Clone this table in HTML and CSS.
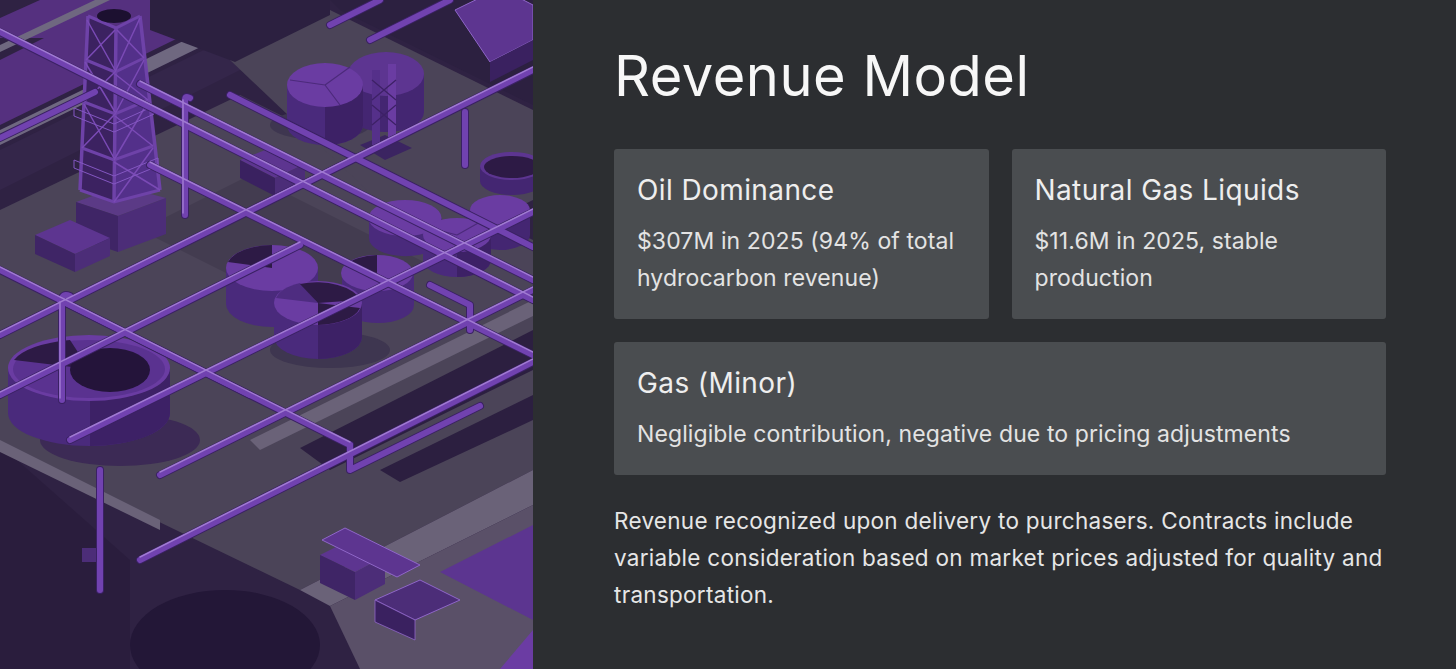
FILE: index.html
```html
<!DOCTYPE html>
<html lang="en">
<head>
<meta charset="utf-8">
<title>Revenue Model</title>
<link rel="stylesheet" href="styles.css">
</head>
<body>
<main class="slide">
  <div class="art">
    <svg class="plant" viewBox="0 0 533 669" width="533" height="669" preserveAspectRatio="none" aria-hidden="true">
      <rect width="533" height="669" fill="#2f2243"/>
      <!-- ground planes -->
      <polygon points="0,18 40,0 150,0 150,12 95,38 0,38" fill="#55307f"/>
      <polygon points="0,45 95,0 110,0 0,52" fill="#6f6880"/>
      <polygon points="0,60 120,0 215,0 215,20 0,125" fill="#55307f"/>
      <polygon points="0,130 210,28 225,35 0,145" fill="#6f6880"/>
      <polygon points="0,150 220,42 260,60 60,160 0,190" fill="#34264a"/>
      <polygon points="0,210 240,95 533,240 533,470 300,590 0,445" fill="#4b4458"/>
      <polygon points="230,60 330,10 533,110 533,200 430,250" fill="#4b4458"/>
      <polygon points="150,0 330,0 330,15 235,62 150,30" fill="#2c2040"/>
      <polygon points="330,0 533,0 533,105 340,10" fill="#2c2040"/>
      <polygon points="140,230 250,175 430,265 320,320" fill="#433c50"/>
      <polygon points="0,445 0,669 130,669 130,560" fill="#2a1d3d"/>
      <polygon points="533,470 300,590 330,606 533,505" fill="#6a6278"/>
      <polygon points="533,300 250,440 260,450 533,316" fill="#6a6278"/>
      <polygon points="533,330 300,448 330,470 533,370" fill="#2c1f40"/>
      <polygon points="533,395 380,470 400,482 533,420" fill="#2c1f40"/>
      <polygon points="533,505 330,606 360,669 533,669" fill="#5a5068"/>
      <polygon points="533,525 440,572 533,620" fill="#5c3590"/>
      <polygon points="533,630 500,669 533,669" fill="#6b3ca3"/>
      <ellipse cx="225" cy="645" rx="95" ry="55" fill="#231737"/>
      <polygon points="0,440 100,490 160,520 160,530 0,452" fill="#6a6278"/>
      <!-- shadows -->
      <ellipse cx="120" cy="440" rx="80" ry="26" fill="#3c2a55"/>
      <ellipse cx="330" cy="350" rx="60" ry="18" fill="#3e3650"/>
      <ellipse cx="320" cy="125" rx="50" ry="15" fill="#3e3650"/>
      <!-- tanks top right -->
      <g>
        <path d="M348,74 v38 a38,20 0 0 0 76,0 v-38 z" fill="#442672"/>
        <ellipse cx="386" cy="74" rx="38" ry="22" fill="#5d3591"/>
        <path d="M287,85 v40 a38,20 0 0 0 76,0 v-40 z" fill="#4a2a7c"/>
        <path d="M325,105 v40 a38,20 0 0 0 38,-20 v-40 z" fill="#3d2166"/>
        <ellipse cx="325" cy="85" rx="38" ry="22" fill="#6a3ca2"/>
        <path d="M325,85 L290,80 M325,85 L350,67 M325,85 L340,105" stroke="#4c2a7b" stroke-width="1.2"/>
      </g>
      <!-- small tower right -->
      <g>
        <polygon points="360,145 385,135 412,148 385,160" fill="#3b2461"/>
        <rect x="372" y="70" width="8" height="75" fill="#55308a"/>
        <rect x="388" y="64" width="8" height="78" fill="#6a3ca2"/>
        <path d="M372,80 L396,100 M396,80 L372,100 M372,105 L396,125 M396,105 L372,125" stroke="#3d2166" stroke-width="1.3"/>
      </g>
      <!-- right tanks -->
      <g>
        <path d="M480,166 v15 a32,14 0 0 0 64,0 v-15 z" fill="#442672"/>
        <ellipse cx="512" cy="166" rx="32" ry="14" fill="#5d3591"/>
        <ellipse cx="512" cy="167" rx="28" ry="11" fill="#2d1a45"/>
        <path d="M470,210 v25 a30,15 0 0 0 60,0 v-25 z" fill="#442672"/>
        <ellipse cx="500" cy="210" rx="30" ry="15" fill="#6a3ca2"/>
        <path d="M369,218 v20 a36,18 0 0 0 73,0 v-20 z" fill="#4a2a7c"/>
        <ellipse cx="405" cy="218" rx="36.5" ry="18" fill="#6a3ca2"/>
        <path d="M423,235 v25 a34,17 0 0 0 68,0 v-25 z" fill="#4a2a7c"/>
        <path d="M457,252 v25 a34,17 0 0 0 34,-17 v-25 z" fill="#3d2166"/>
        <ellipse cx="457" cy="235" rx="34" ry="17" fill="#6a3ca2"/>
        <path d="M457,235 L430,228 M457,235 L480,222" stroke="#4c2a7b" stroke-width="1.2"/>
      </g>
      <!-- middle tanks -->
      <g>
        <path d="M226,268 v36 a46,23 0 0 0 92,0 v-36 z" fill="#4a2a7c"/>
        <ellipse cx="272" cy="268" rx="46" ry="23" fill="#6a3ca2"/>
        <path d="M272,268 L228,262 A46,23 0 0 1 272,245 z" fill="#2d1a45"/>
        <path d="M342,273 v32 a36,18 0 0 0 72,0 v-32 z" fill="#4a2a7c"/>
        <ellipse cx="377" cy="273" rx="36" ry="18" fill="#6a3ca2"/>
        <path d="M377,273 L345,266 A36,18 0 0 1 377,255 z" fill="#2d1a45"/>
        <path d="M274,303 v34 a44,22 0 0 0 88,0 v-34 z" fill="#4a2a7c"/>
        <path d="M318,325 v34 a44,22 0 0 0 44,-22 v-34 z" fill="#3d2166"/>
        <ellipse cx="318" cy="303" rx="44" ry="22" fill="#6a3ca2"/>
        <path d="M318,303 L276,298 A44,22 0 0 1 300,283 z" fill="#4e2c80"/>
        <path d="M318,303 L360,308 A44,22 0 0 1 318,325 z" fill="#2d1a45"/>
        <path d="M300,284 A44,22 0 0 1 360,300 L318,303 z" fill="#2d1a45"/>
      </g>
      <!-- big tank -->
      <g>
        <path d="M8,368 v45 a81,33 0 0 0 162,0 v-45 z" fill="#4a2a7c"/>
        <path d="M90,401 v45 a81,33 0 0 0 80,-33 v-45 z" fill="#3d2166"/>
        <ellipse cx="89" cy="368" rx="81" ry="33" fill="#6a3ca2"/>
        <ellipse cx="89" cy="369" rx="76" ry="29" fill="#5a3290"/>
        <path d="M14,360 A76,29 0 0 1 70,340 L89,369 z" fill="#2d1a45"/>
        <ellipse cx="110" cy="370" rx="40" ry="22" fill="#24143a"/>
      </g>
      <!-- tower -->
      <g>
        <polygon points="76,202 120,186 166,198 118,216" fill="#5b3a86"/>
        <polygon points="76,202 118,216 118,252 76,238" fill="#3f2566"/>
        <polygon points="118,216 166,198 166,234 118,252" fill="#4c2d78"/>
        <polygon points="88,16 116,28 114,202 80,190" fill="#3c2261"/>
        <polygon points="116,28 140,16 160,190 114,202" fill="#53308a"/>
        <path d="M88,16 L80,190 M116,28 L114,202 M140,16 L160,190" stroke="#6e42a8" stroke-width="3.5" fill="none"/>
        <path d="M88,16 L116,28 L140,16 M86,60 L115,72 L144,58 M84,102 L115,114 L148,100 M82,148 L114,160 L153,146 M80,190 L114,202 L160,190" stroke="#6e42a8" stroke-width="3" fill="none"/>
        <path d="M87,20 L115,70 M115,30 L86,60 M85,62 L115,112 M115,72 L84,102 M84,104 L114,158 M115,114 L82,148 M117,30 L144,58 M140,18 L115,72 M115,74 L148,100 M144,60 L115,114 M115,116 L153,146 M148,102 L114,160 M114,162 L160,190 M153,148 L114,202" stroke="#7a4ab5" stroke-width="1.5" fill="none"/>
        <ellipse cx="114" cy="16" rx="17" ry="7" fill="#1c1030"/>
        <path d="M74,108 L114,124 L154,106 M74,108 v8 L114,132 L154,114 v-8" stroke="#8457c2" stroke-width="1" fill="none"/>
        <path d="M74,160 L114,176 L158,158 M74,160 v8 L114,184 L158,166 v-8" stroke="#8457c2" stroke-width="1" fill="none"/>
      </g>
      <!-- machinery -->
      <g>
        <polygon points="35,235 70,220 110,238 75,254" fill="#5d3590"/>
        <polygon points="35,235 75,254 75,272 35,254" fill="#3f2566"/>
        <polygon points="75,254 110,238 110,256 75,272" fill="#4c2d78"/>
        <polygon points="240,160 270,148 305,164 275,178" fill="#5d3590"/>
        <polygon points="240,160 275,178 275,196 240,178" fill="#3a2160"/>
        <polygon points="275,178 305,164 305,182 275,196" fill="#4c2d78"/>
        <polygon points="320,555 350,540 385,556 355,572" fill="#5d3590"/>
        <polygon points="320,555 355,572 355,600 320,583" fill="#3f2566"/>
        <polygon points="355,572 385,556 385,584 355,600" fill="#4c2d78"/>
        <polygon points="322,540 345,528 420,565 397,577" fill="#5d3590" stroke="#8f66c8" stroke-width="1"/>
        <polygon points="375,600 420,580 460,600 415,620" fill="#4c2d78" stroke="#8f66c8" stroke-width="1"/>
        <polygon points="375,600 415,620 415,640 375,622" fill="#3a2160" stroke="#8f66c8" stroke-width="0.8"/>
        <polygon points="455,10 500,-12 533,5 533,40 490,62" fill="#5d3590" stroke="#8f66c8" stroke-width="1"/>
        <polygon points="490,62 533,40 533,60 490,82" fill="#3a2160"/>
        <rect x="82" y="548" width="14" height="14" fill="#4c2d78"/>
      </g>
      <!-- pipes -->
      <g fill="none" stroke-linecap="round" stroke-linejoin="round">
        <g stroke="#3a2163" stroke-width="8">
          <path d="M0,32 L215,140 L533,300"/>
          <path d="M140,84 L533,280"/>
          <path d="M150,165 L533,355"/>
          <path d="M0,270 L350,445"/>
          <path d="M60,300 L250,395"/>
          <path d="M230,95 L533,247"/>
          <path d="M0,335 L533,70"/>
          <path d="M0,395 L300,245"/>
          <path d="M70,440 L533,212"/>
          <path d="M160,475 L533,290"/>
          <path d="M140,560 L533,362"/>
          <path d="M0,138 L95,92"/>
          <path d="M330,25 L380,0"/>
          <path d="M370,40 L450,0"/>
          <path d="M185,215 V100 Q185,95 190,98"/>
          <path d="M465,165 V112"/>
          <path d="M62,400 V300 Q62,293 70,296"/>
          <path d="M100,470 V590"/>
          <path d="M350,445 V470 L480,406"/>
          <path d="M430,285 L470,305 V330"/>
        </g>
        <g stroke="#7142b0" stroke-width="6">
          <path d="M0,32 L215,140 L533,300"/>
          <path d="M140,84 L533,280"/>
          <path d="M150,165 L533,355"/>
          <path d="M0,270 L350,445"/>
          <path d="M60,300 L250,395"/>
          <path d="M230,95 L533,247"/>
          <path d="M0,335 L533,70"/>
          <path d="M0,395 L300,245"/>
          <path d="M70,440 L533,212"/>
          <path d="M160,475 L533,290"/>
          <path d="M140,560 L533,362"/>
          <path d="M0,138 L95,92"/>
          <path d="M330,25 L380,0"/>
          <path d="M370,40 L450,0"/>
          <path d="M185,215 V100 Q185,95 190,98"/>
          <path d="M465,165 V112"/>
          <path d="M62,400 V300 Q62,293 70,296"/>
          <path d="M100,470 V590"/>
          <path d="M350,445 V470 L480,406"/>
          <path d="M430,285 L470,305 V330"/>
        </g>
        <g stroke="#a07ad2" stroke-width="1.5">
          <path d="M0,29 L215,137 L533,297"/>
          <path d="M140,81 L533,277"/>
          <path d="M150,162 L533,352"/>
          <path d="M0,267 L350,442"/>
          <path d="M0,332 L533,67"/>
          <path d="M0,392 L300,242"/>
          <path d="M70,437 L533,209"/>
          <path d="M160,472 L533,287"/>
          <path d="M140,557 L533,359"/>
          <path d="M183,213 V100"/>
          <path d="M60,398 V302"/>
        </g>
      </g>
    </svg>
  </div>
  <section class="content">
    <h1 class="title">Revenue Model</h1>
    <div class="cards">
      <article class="card">
        <h2 class="card-title">Oil Dominance</h2>
        <p class="card-text">$307M in 2025 (94% of total hydrocarbon revenue)</p>
      </article>
      <article class="card">
        <h2 class="card-title">Natural Gas Liquids</h2>
        <p class="card-text">$11.6M in 2025, stable production</p>
      </article>
      <article class="card card-wide">
        <h2 class="card-title">Gas (Minor)</h2>
        <p class="card-text">Negligible contribution, negative due to pricing adjustments</p>
      </article>
    </div>
    <p class="note">Revenue recognized upon delivery to purchasers. Contracts include variable consideration based on market prices adjusted for quality and transportation.</p>
  </section>
</main>
</body>
</html>
```

FILE: styles.css
```css
* {
  box-sizing: border-box;
}

html, body {
  margin: 0;
  padding: 0;
  background: #2c2e31;
}

body {
  font-family: Inter, "Noto Sans", "Liberation Sans", sans-serif;
  color: #e6e6e6;
}

.slide {
  display: flex;
  width: 1456px;
  height: 669px;
  overflow: hidden;
}

.art {
  flex: 0 0 533px;
  height: 669px;
}

.plant {
  display: block;
}

.content {
  flex: 1 1 auto;
  padding: 43px 70px 0 81px;
}

.title {
  margin: 0;
  font-size: 56px;
  font-weight: 400;
  line-height: 67px;
  color: #f7f7f7;
  letter-spacing: 0.5px;
}

.cards {
  display: grid;
  grid-template-columns: 1fr 1fr;
  gap: 23px;
  margin-top: 39px;
}

.card {
  background: #4a4d50;
  border-radius: 3px;
  padding: 23px 23px 22px;
}

.card-wide {
  grid-column: 1 / span 2;
}

.card-title {
  margin: 0;
  font-size: 28px;
  font-weight: 400;
  line-height: 36px;
  color: #eeeeee;
  letter-spacing: 0.4px;
}

.card-text {
  margin: 15px 0 0;
  font-size: 23px;
  line-height: 37px;
  color: #e3e3e3;
  letter-spacing: 0.1px;
}

.note {
  margin: 27px 0 0;
  font-size: 22.5px;
  line-height: 37px;
  color: #e6e6e6;
  letter-spacing: 0.28px;
}
```
